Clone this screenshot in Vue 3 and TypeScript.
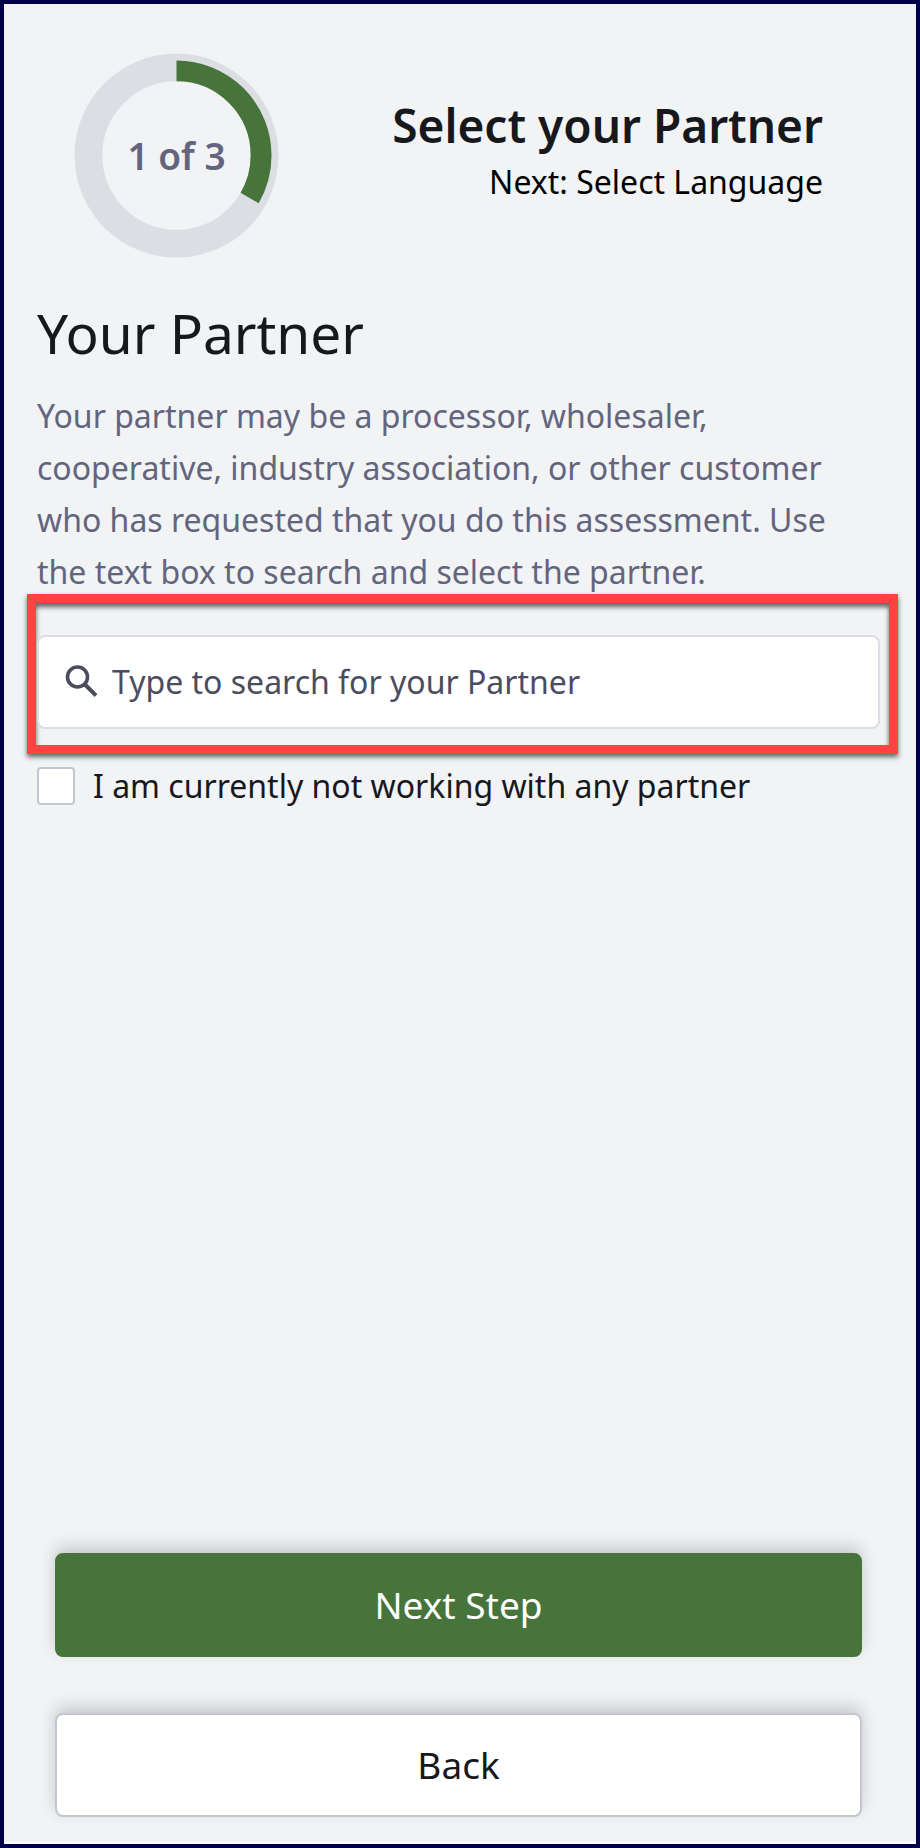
<script setup lang="ts">
import { ref } from 'vue'

const step = ref(1)
const total = 3
const radius = 85
const circumference = 2 * Math.PI * radius
const query = ref('')
const noPartner = ref(false)
</script>

<template>
  <main class="screen">
    <header class="progress">
      <div class="ring">
        <svg viewBox="0 0 206 206" aria-hidden="true">
          <circle cx="103" cy="103" r="88.5" fill="none" stroke="#dddee4" stroke-width="28" />
          <circle
            cx="103"
            cy="103"
            :r="radius"
            fill="none"
            stroke="#47743a"
            stroke-width="21"
            :stroke-dasharray="`${(circumference * step) / total} ${circumference}`"
            transform="rotate(-90 103 103)"
          />
        </svg>
        <span class="count">{{ step }} of {{ total }}</span>
      </div>
      <div class="titles">
        <h1>Select your Partner</h1>
        <p>Next: Select Language</p>
      </div>
    </header>

    <section class="partner">
      <h2>Your Partner</h2>
      <p class="intro">
        Your partner may be a processor, wholesaler, cooperative, industry association, or other customer who has
        requested that you do this assessment. Use the text box to search and select the partner.
      </p>
      <div class="highlight">
        <label class="search">
          <svg viewBox="0 0 32 32" aria-hidden="true">
            <circle cx="12.5" cy="12" r="10" fill="none" stroke="#4b4c60" stroke-width="3.6" />
            <path d="M19.5 19 31 30.5" stroke="#4b4c60" stroke-width="4" />
          </svg>
          <input v-model="query" type="text" aria-label="Partner" placeholder="Type to search for your Partner" />
        </label>
      </div>
      <label class="check">
        <input v-model="noPartner" type="checkbox" />
        <span>I am currently not working with any partner</span>
      </label>
    </section>

    <footer class="actions">
      <button type="button" class="next">Next Step</button>
      <button type="button" class="back">Back</button>
    </footer>
  </main>
</template>

<style>
body {
  background: #f1f3f5;
}
</style>

<style scoped>
* {
  box-sizing: border-box;
}
.screen {
  display: flex;
  flex-direction: column;
  min-height: 100vh;
  padding: 49px 32px 27px 33px;
  border: 4px solid #00004a;
  background: #f1f3f5;
  box-shadow: inset 0 -2px 0 #fff;
  color: #17181c;
  font-family: "Noto Sans", sans-serif;
}
h1,
h2,
p {
  margin: 0;
}
.progress {
  display: flex;
  align-items: center;
  justify-content: space-between;
  padding: 0 61px 0 37px;
}
.ring {
  display: grid;
  width: 205px;
  height: 205px;
}
.ring > * {
  grid-area: 1 / 1;
}
.count {
  place-self: center;
  color: #63657e;
  font-size: 37px;
  font-weight: 600;
}
.titles {
  padding-bottom: 8px;
  text-align: right;
}
h1 {
  font-size: 46px;
  font-weight: 600;
  line-height: 60px;
}
.titles p {
  color: #000;
  font-size: 32px;
  line-height: 54px;
}
h2 {
  margin-top: 37px;
  font-size: 55px;
  font-weight: 400;
  line-height: 76px;
}
.intro {
  margin-top: 19px;
  padding-right: 40px;
  color: #63657e;
  font-size: 32px;
  line-height: 52px;
}
.highlight {
  margin: -4px -14px 0 -10px;
  padding: 32px 9px 16px 1px;
  border: 9px solid #ff4343;
  box-shadow: 0 3px 5px rgba(0, 0, 0, 0.6), inset 0 4px 5px rgba(0, 0, 0, 0.6);
}
.search {
  display: flex;
  align-items: center;
  gap: 15px;
  height: 94px;
  padding: 0 26px 2px;
  border: 2px solid #dddee4;
  border-radius: 8px;
  background: #fff;
}
.search svg {
  width: 32px;
  height: 32px;
}
.search input {
  flex: 1;
  min-width: 0;
  padding: 0;
  border: 0;
  outline: 0;
  background: transparent;
  color: #4b4c60;
  font: inherit;
  font-size: 32px;
}
.search input::placeholder {
  color: #4b4c60;
  opacity: 1;
}
.check {
  display: flex;
  align-items: center;
  gap: 18px;
  margin-top: 6px;
  font-size: 32px;
  line-height: 52px;
}
.check input {
  appearance: none;
  width: 38px;
  height: 38px;
  margin: 0;
  border: 2px solid #c3c5d0;
  border-radius: 4px;
  background: #fff;
}
.check input:checked {
  background: #47743a;
}
.actions {
  display: flex;
  flex-direction: column;
  gap: 56px;
  margin-top: auto;
  padding: 0 22px 0 18px;
}
button {
  height: 104px;
  padding: 0 0 2px;
  border: 2px solid #c3c5d0;
  border-radius: 8px;
  background: #fff;
  box-shadow: 0 -6px 16px rgba(0, 0, 0, 0.18);
  color: #17181c;
  font: inherit;
  font-size: 37px;
}
.next {
  border-color: #47743a;
  background: #47743a;
  color: #fff;
}
</style>
